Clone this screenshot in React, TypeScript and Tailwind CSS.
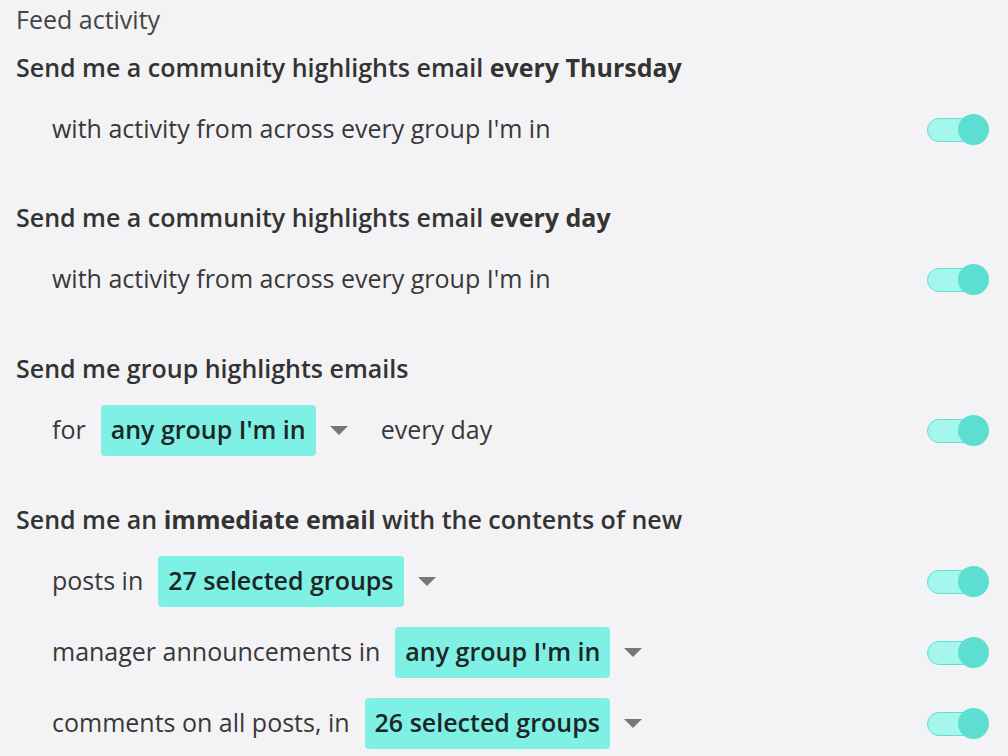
import React from "react";

const Toggle = () => (
    <div className="relative w-[62px] h-[31px] shrink-0">
        <div className="absolute left-0 top-[4px] w-[58px] h-[24px] rounded-full bg-[#a5f7ee] border border-[#5fe0d2]" />
        <div className="absolute right-0 top-0 w-[31px] h-[31px] rounded-full bg-[#5cdfd0]" />
    </div>
);

const Caret = () => (
    <svg width="18" height="9" viewBox="0 0 18 9" className="shrink-0">
        <polygon points="0,0 18,0 9,9" fill="#777777" />
    </svg>
);

const Pill = ({ label }: { label: string }) => (
    <span className="h-[51px] flex items-center px-[10px] rounded-[4px] bg-[#7ef0e4] text-[#1c2626] font-semibold">
        {label}
    </span>
);

const Select = ({ label }: { label: string }) => (
    <div className="flex items-center gap-[14px]">
        <Pill label={label} />
        <Caret />
    </div>
);

const Row = ({ children, className = "" }: { children: React.ReactNode; className?: string }) => (
    <div className={`h-[52px] flex items-center justify-between pl-9 ${className}`}>
        <div className="flex items-center">{children}</div>
        <Toggle />
    </div>
);

const Heading = ({ children, className = "" }: { children: React.ReactNode; className?: string }) => (
    <h2 className={`h-[36px] flex items-center font-semibold text-[#333333] ${className}`}>
        <span>{children}</span>
    </h2>
);

export default function App() {
    return (
        <div
            className="min-h-screen w-full bg-[#f3f3f5] pl-4 pr-[19px] text-[25px] text-[#383838]"
            style={{ fontFamily: '"Open Sans", "Liberation Sans", sans-serif' }}
        >
            <div className="h-[35px] pt-[5px] flex items-center text-[25px] text-[#444444]">Feed activity</div>

            <Heading className="mt-[15px]">
                Send me a community highlights email <b className="font-bold">every Thursday</b>
            </Heading>
            <Row className="mt-[17px]">with activity from across every group I'm in</Row>

            <Heading className="mt-[45px]">
                Send me a community highlights email <b className="font-bold">every day</b>
            </Heading>
            <Row className="mt-[17px]">with activity from across every group I'm in</Row>

            <Heading className="mt-[46px]">Send me group highlights emails</Heading>
            <Row className="mt-[17px]">
                <span className="mr-[15px]">for</span>
                <Select label="any group I'm in" />
                <span className="ml-[33px]">every day</span>
            </Row>

            <Heading className="mt-[46px]">
                Send me an <b className="font-bold">immediate email</b> with the contents of new
            </Heading>
            <div className="mt-[17px] flex flex-col gap-[19px]">
                <Row>
                    <span className="mr-[15px]">posts in</span>
                    <Select label="27 selected groups" />
                </Row>
                <Row>
                    <span className="mr-[15px]">manager announcements in</span>
                    <Select label="any group I'm in" />
                </Row>
                <Row>
                    <span className="mr-[15px]">comments on all posts, in</span>
                    <Select label="26 selected groups" />
                </Row>
            </div>
        </div>
    );
}
